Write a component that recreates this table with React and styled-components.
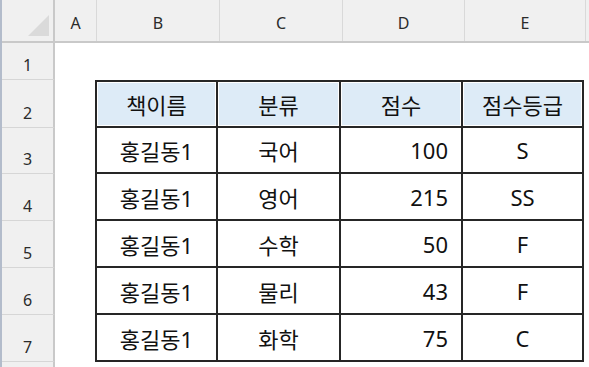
import React from 'react';
import styled, { createGlobalStyle } from 'styled-components';

const GlobalStyle = createGlobalStyle`
  body {
    margin: 0;
    background: #ffffff;
  }
`;

const Sheet = styled.div`
  width: 589px;
  height: 367px;
  overflow: hidden;
  display: flex;
  flex-direction: column;
  background: #ffffff;
  border-left: 2px solid #b3bccb;
  box-sizing: border-box;
  font-family: 'Noto Sans', 'Noto Sans CJK KR', sans-serif;
`;

const HeaderBar = styled.div`
  display: flex;
  height: 43px;
  flex-shrink: 0;
  background: #f0f0f0;
  border-bottom: 2px solid #c9c9c9;
  box-sizing: border-box;
`;

const Corner = styled.div`
  width: 53px;
  flex-shrink: 0;
  display: flex;
  justify-content: flex-end;
  align-items: flex-end;
  padding: 0 4px 5px 0;
  box-sizing: border-box;
  border-right: 2px solid #c9c9c9;
`;

const Triangle = styled.div`
  width: 0;
  height: 0;
  border-left: 21px solid transparent;
  border-bottom: 21px solid #dadada;
`;

const ColHead = styled.div`
  width: ${(p) => p.$w}px;
  flex-shrink: 0;
  display: flex;
  align-items: center;
  justify-content: center;
  padding-top: 4px;
  box-sizing: border-box;
  border-right: 1px solid #d9d9d9;
  font-size: 16px;
  color: #2b2b2b;
`;

const Row = styled.div`
  display: flex;
  height: ${(p) => p.$h}px;
  flex-shrink: 0;
`;

const RowHead = styled.div`
  width: 53px;
  flex-shrink: 0;
  display: flex;
  align-items: flex-end;
  justify-content: center;
  padding-bottom: 4px;
  box-sizing: border-box;
  background: #f0f0f0;
  border-right: 2px solid #c9c9c9;
  border-bottom: 1px solid #d6d6d6;
  font-size: 16px;
  line-height: 20px;
  color: #2b2b2b;
`;

const Blank = styled.div`
  width: ${(p) => p.$w}px;
  flex-shrink: 0;
`;

const Cell = styled.div`
  width: ${(p) => p.$w}px;
  flex-shrink: 0;
  display: flex;
  align-items: center;
  justify-content: ${(p) => (p.$right ? 'flex-end' : 'center')};
  padding: 0 ${(p) => (p.$right ? '13px' : '0')} 0 0;
  box-sizing: border-box;
  background: ${(p) => (p.$head ? '#ddebf7' : '#ffffff')};
  box-shadow: ${(p) => (p.$head ? 'inset 0 0 0 1px #ffffff' : 'none')};
  border-right: 2px solid #262626;
  border-bottom: 2px solid #262626;
  border-left: ${(p) => (p.$first ? '2px solid #262626' : 'none')};
  border-top: ${(p) => (p.$top ? '2px solid #262626' : 'none')};
  font-size: 22px;
  color: #111111;
  white-space: nowrap;
`;

const cols = [
  { key: 'B', w: 123 },
  { key: 'C', w: 123 },
  { key: 'D', w: 122 },
  { key: 'E', w: 121 },
];

const data = [
  ['홍길동1', '국어', '100', 'S'],
  ['홍길동1', '영어', '215', 'SS'],
  ['홍길동1', '수학', '50', 'F'],
  ['홍길동1', '물리', '43', 'F'],
  ['홍길동1', '화학', '75', 'C'],
];

const heights = [46, 47, 47, 47, 47];

const App = () => {
  return (
    <>
      <GlobalStyle />
      <Sheet>
        <HeaderBar>
          <Corner>
            <Triangle />
          </Corner>
          <ColHead $w={42}>A</ColHead>
          <ColHead $w={123}>B</ColHead>
          <ColHead $w={123}>C</ColHead>
          <ColHead $w={122}>D</ColHead>
          <ColHead $w={121}>E</ColHead>
          <ColHead $w={40} />
        </HeaderBar>

        <Row $h={37}>
          <RowHead>1</RowHead>
        </Row>

        <Row $h={48}>
          <RowHead>2</RowHead>
          <Blank $w={40} />
          {['책이름', '분류', '점수', '점수등급'].map((t, i) => (
            <Cell key={t} $w={cols[i].w} $head $top $first={i === 0}>
              {t}
            </Cell>
          ))}
        </Row>

        {data.map((r, ri) => (
          <Row key={ri} $h={heights[ri]}>
            <RowHead>{ri + 3}</RowHead>
            <Blank $w={40} />
            {r.map((v, ci) => (
              <Cell key={ci} $w={cols[ci].w} $first={ci === 0} $right={ci === 2}>
                {v}
              </Cell>
            ))}
          </Row>
        ))}

        <Row $h={20}>
          <RowHead />
        </Row>
      </Sheet>
    </>
  );
};

export default App;
